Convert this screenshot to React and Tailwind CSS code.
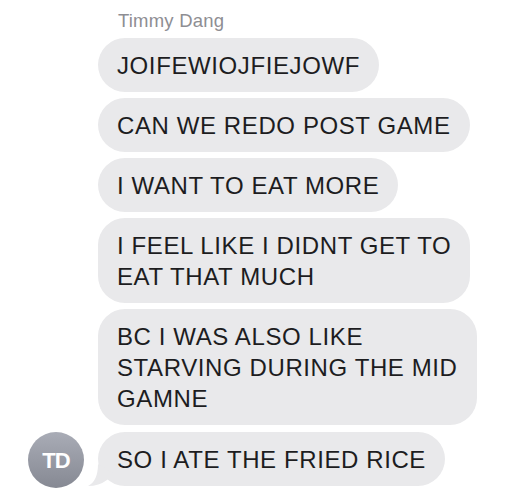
import React from "react";

const messages = [
  ["JOIFEWIOJFIEJOWF"],
  ["CAN WE REDO POST GAME"],
  ["I WANT TO EAT MORE"],
  ["I FEEL LIKE I DIDNT GET TO", "EAT THAT MUCH"],
  ["BC I WAS ALSO LIKE", "STARVING DURING THE MID", "GAMNE"],
];

const Bubble = ({ lines, tail }) => (
  <div className="relative w-fit rounded-[27px] bg-[#e9e9eb] px-[19px] py-[11.5px] text-[24px] leading-[31px] tracking-[0.6px] text-[#1d1d1f] whitespace-nowrap">
    {lines.map((line, i) => (
      <div key={i}>{line}</div>
    ))}
    {/* little tail on the last bubble of the group */}
    {tail && (
      <svg
        className="absolute -left-[10px] bottom-0"
        width="26"
        height="22"
        viewBox="0 0 26 22"
      >
        <path d="M10 0 Q10 17 0 22 Q11 22 19 16 L26 10 L10 0 Z" fill="#e9e9eb" />
      </svg>
    )}
  </div>
);

export default function App() {
  return (
    <div
      className="w-[524px] h-[500px] bg-white pt-[10px]"
      style={{ fontFamily: '"Liberation Sans", Arial, sans-serif' }}
    >
      {/* sender name */}
      <div className="pl-[118px] text-[18.5px] leading-[22px] tracking-[0.2px] text-[#8e8e93] mb-[6px]">
        Timmy Dang
      </div>

      <div className="flex flex-col gap-[6px]">
        {messages.map((lines, i) => (
          <div key={i} className="pl-[98px]">
            <Bubble lines={lines} />
          </div>
        ))}

        {/* last message with avatar */}
        <div className="flex items-end pl-[28px] gap-[14px] mt-[1px]">
          <div className="w-[56px] h-[56px] rounded-full bg-gradient-to-b from-[#a9acb6] to-[#868993] flex items-center justify-center text-white text-[22px] font-bold -mb-[2px] tracking-[-1px]">
            TD
          </div>
          <Bubble lines={["SO I ATE THE FRIED RICE"]} tail />
        </div>
      </div>
    </div>
  );
}
